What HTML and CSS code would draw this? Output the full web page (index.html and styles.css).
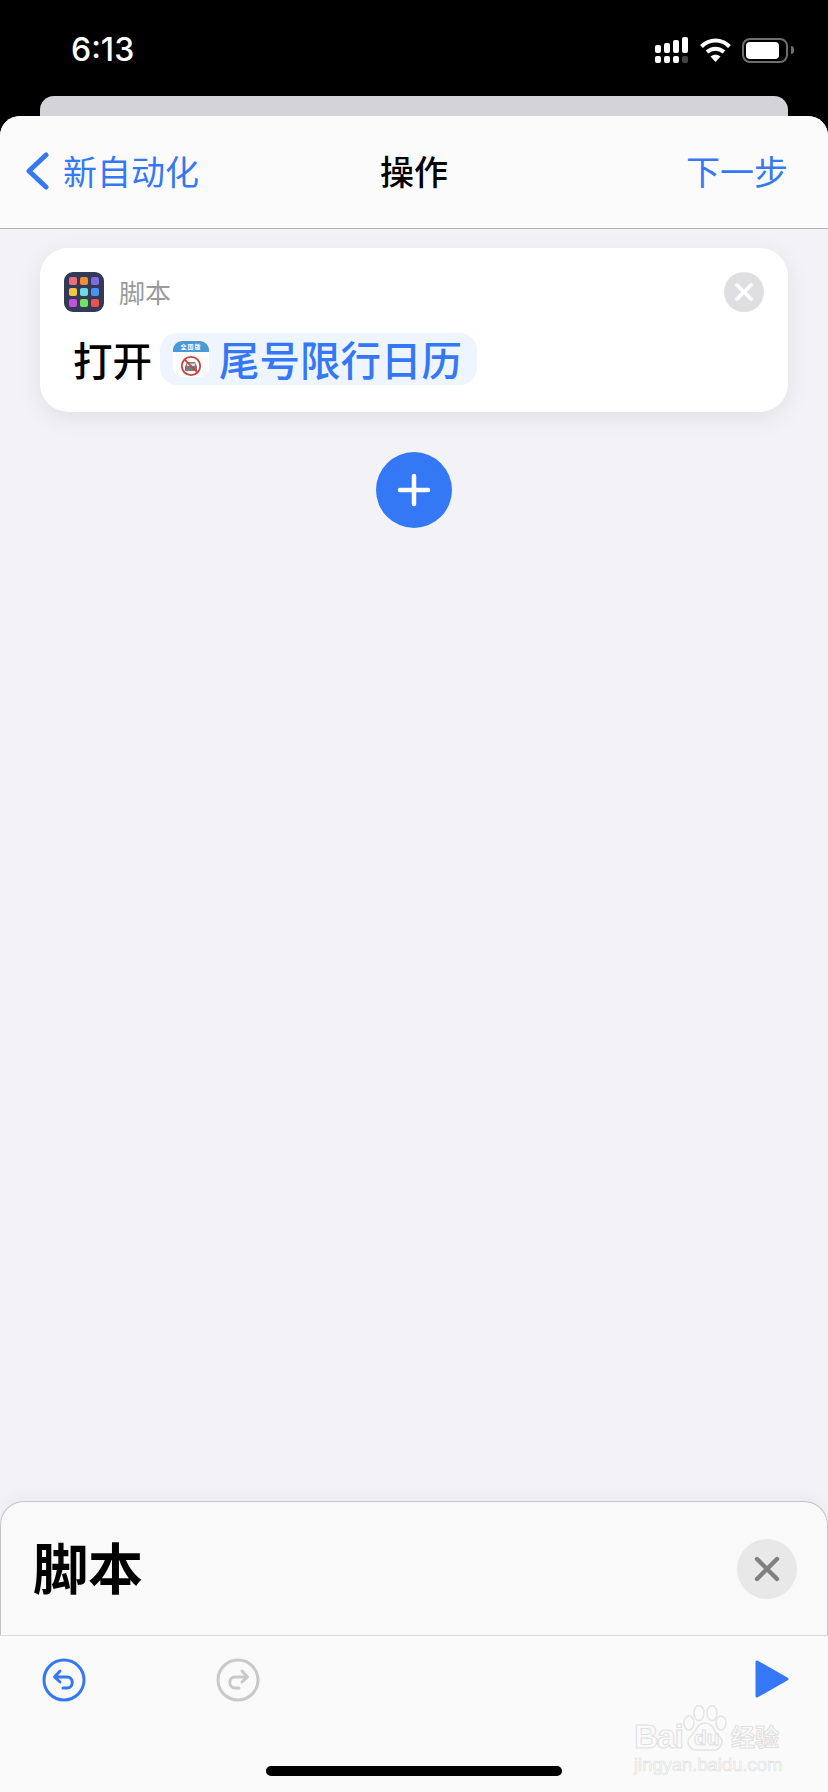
FILE: index.html
```html
<!DOCTYPE html>
<html lang="zh-CN">

<head>
  <meta charset="UTF-8">
  <meta name="viewport" content="width=device-width, initial-scale=1.0">
  <title>操作</title>

  <link rel="stylesheet" href="styles.css">
</head>

<body>
  <header class="status-bar">
    <span class="time">6:13</span>
    <div class="status-icons">
      <svg width="33" height="26" viewBox="0 0 33 26" fill="#fff">
        <rect x="0" y="8" width="6" height="8" rx="2" />
        <rect x="9" y="6" width="6" height="10" rx="2" />
        <rect x="18" y="3" width="6" height="13" rx="2" />
        <rect x="27" y="0" width="6" height="16" rx="2" />
        <rect x="0" y="19" width="6" height="7" rx="2" />
        <rect x="9" y="19" width="6" height="7" rx="2" />
        <rect x="18" y="19" width="6" height="7" rx="2" />
        <rect x="27" y="19" width="6" height="7" rx="2" fill="#444" />
      </svg>
      <svg class="wifi" width="31" height="24" viewBox="0 0 31 24" fill="none" stroke="#fff" stroke-width="4">
        <path d="M1.5 8.5C9.5 0.5 21.5 0.5 29.5 8.5" />
        <path d="M7 14C12 9.5 19 9.5 24 14" />
        <path d="M15.5 24L10.5 18.5C13.5 16 17.5 16 20.5 18.5Z" fill="#fff" stroke="none" />
      </svg>
      <div class="battery">
        <div class="battery-level"></div>
      </div>
      <div class="battery-cap"></div>
    </div>
  </header>

  <div class="peek-card"></div>

  <div class="sheet">
    <nav class="nav-bar">
      <a class="nav-back">
        <svg width="24" height="38" viewBox="0 0 24 38" fill="none" stroke="#3478f6" stroke-width="5" stroke-linecap="round" stroke-linejoin="round">
          <path d="M21 3L4 19L21 35" />
        </svg>
        <span>新自动化</span>
      </a>
      <span class="nav-title">操作</span>
      <a class="nav-next">下一步</a>
    </nav>

    <main class="content">
      <section class="action-card">
        <div class="action-head">
          <div class="scripting-icon">
            <i class="dot dot-rose"></i>
            <i class="dot dot-orange"></i>
            <i class="dot dot-violet"></i>
            <i class="dot dot-yellow"></i>
            <i class="dot dot-cyan"></i>
            <i class="dot dot-blue"></i>
            <i class="dot dot-purple"></i>
            <i class="dot dot-green"></i>
            <i class="dot dot-red"></i>
          </div>
          <span class="action-name">脚本</span>
          <button class="remove-btn">
            <svg width="18" height="18" viewBox="0 0 18 18" stroke="#fff" stroke-width="3.6" stroke-linecap="round">
              <path d="M2 2L16 16M16 2L2 16" />
            </svg>
          </button>
        </div>
        <div class="action-body">
          <span class="verb">打开</span>
          <div class="app-pill">
            <div class="app-icon">
              <div class="app-icon-band">全国版</div>
              <svg width="22" height="22" viewBox="0 0 22 22" fill="none">
                <path d="M5 16V11.5L7 7H15L17 11.5V16Z" fill="#7b7b7b" />
                <rect x="7" y="8.5" width="8" height="2.5" fill="#e2e2e2" />
                <circle cx="11" cy="11" r="9.2" stroke="#c9443c" stroke-width="1.8" />
                <path d="M4.6 4.6L17.4 17.4" stroke="#c9443c" stroke-width="1.8" />
              </svg>
            </div>
            <span class="app-name">尾号限行日历</span>
          </div>
        </div>
      </section>

      <button class="add-btn">
        <svg width="34" height="34" viewBox="0 0 34 34" stroke="#fff" stroke-width="4.5" stroke-linecap="round">
          <path d="M17 3V31M3 17H31" />
        </svg>
      </button>

      <section class="panel">
        <h1 class="panel-title">脚本</h1>
        <button class="panel-close">
          <svg width="26" height="26" viewBox="0 0 26 26" stroke="#808080" stroke-width="4.4" stroke-linecap="round">
            <path d="M3 3L23 23M23 3L3 23" />
          </svg>
        </button>
      </section>

      <footer class="toolbar">
        <svg width="44" height="44" viewBox="0 0 44 44" fill="none" stroke="#3478f6" stroke-width="3" stroke-linecap="round" stroke-linejoin="round">
          <circle cx="22" cy="22" r="20" />
          <path d="M18 13L12.5 19L18 24M13 19H25C32 19 32 30 25 30H21" />
        </svg>
        <svg class="redo" width="44" height="44" viewBox="0 0 44 44" fill="none" stroke="#c9c9c9" stroke-width="3" stroke-linecap="round" stroke-linejoin="round">
          <circle cx="22" cy="22" r="20" />
          <path d="M26 13L31.5 19L26 24M31 19H19C12 19 12 30 19 30H23" />
        </svg>
        <svg class="play" width="34" height="38" viewBox="0 0 34 38" fill="#3478f6" stroke="#3478f6" stroke-width="3" stroke-linejoin="round">
          <path d="M2 2V36L32 19Z" />
        </svg>
        <div class="home-indicator"></div>

        <div class="watermark">
          <div class="watermark-top">
            <span class="watermark-bai">Bai</span>
            <div class="watermark-paw">
              <svg width="44" height="46" viewBox="0 0 44 46" fill="#fafafa" stroke="#e4e4e4" stroke-width="1.5">
                <ellipse cx="6" cy="18" rx="5" ry="7" />
                <ellipse cx="16" cy="8" rx="5" ry="7.5" />
                <ellipse cx="29" cy="8" rx="5" ry="7.5" />
                <ellipse cx="38" cy="18" rx="5" ry="7" />
                <path d="M22 18C14 18 13 27 8 31C2 36 6 45 14 45H30C38 45 42 36 36 31C31 27 30 18 22 18Z" />
              </svg>
              <span class="watermark-du">du</span>
            </div>
            <span class="watermark-cn">经验</span>
          </div>
          <div class="watermark-url">jingyan.baidu.com</div>
        </div>
      </footer>
    </main>
  </div>
</body>

</html>
```

FILE: styles.css
```css
* {
  box-sizing: border-box;
}

html,
body {
  margin: 0;
  height: 100%;
}

body {
  background: #000;
  display: flex;
  flex-direction: column;
  font-family: "Noto Sans CJK SC", "Noto Sans", sans-serif;
  height: 1792px;
  overflow: hidden;
  width: 828px;
}

button {
  border: 0;
  display: flex;
  align-items: center;
  justify-content: center;
  padding: 0;
}

.status-bar {
  align-items: flex-start;
  display: flex;
  flex: none;
  height: 96px;
  justify-content: space-between;
  padding: 30px 34px 0 71px;
}

.time {
  color: #fff;
  font-family: Inter, sans-serif;
  font-size: 32px;
  font-weight: 500;
  line-height: 40px;
}

.status-icons {
  align-items: center;
  display: flex;
  margin-top: 7px;
}

.wifi {
  margin-left: 12px;
}

.battery {
  border: 2px solid #6e6e6e;
  border-radius: 8px;
  height: 25px;
  margin-left: 11px;
  padding: 2px;
  width: 46px;
}

.battery-level {
  background: #fff;
  border-radius: 4px;
  height: 100%;
  width: 33px;
}

.battery-cap {
  background: #6e6e6e;
  border-radius: 0 3px 3px 0;
  height: 8px;
  margin-left: 3px;
  width: 3px;
}

.peek-card {
  background: #d4d4d8;
  border-radius: 14px 14px 0 0;
  flex: none;
  height: 20px;
  margin: 0 40px;
}

.sheet {
  background: #f2f2f7;
  border-radius: 20px 20px 0 0;
  display: flex;
  flex: 1;
  flex-direction: column;
  min-height: 0;
  overflow: hidden;
}

.nav-bar {
  align-items: center;
  background: #fbfbfc;
  border-bottom: 1.5px solid #b2b2b4;
  display: flex;
  flex: none;
  font-size: 34px;
  height: 113px;
  justify-content: space-between;
  padding: 0 40px 3px 25px;
  position: relative;
}

.nav-back {
  align-items: center;
  color: #3478f6;
  display: flex;
  gap: 14px;
}

.nav-title {
  color: #000;
  font-weight: 500;
  left: 380px;
  position: absolute;
}

.nav-next {
  color: #3478f6;
}

.content {
  display: flex;
  flex: 1;
  flex-direction: column;
  min-height: 0;
  padding-top: 19px;
}

.action-card {
  background: #fff;
  border-radius: 28px;
  box-shadow: 0 6px 24px rgba(0, 0, 0, 0.08);
  flex: none;
  height: 164px;
  margin: 0 40px;
  padding: 24px 24px 0;
}

.action-head {
  align-items: center;
  display: flex;
}

.scripting-icon {
  background: #323a58;
  border-radius: 9px;
  display: grid;
  gap: 3px;
  grid-template-columns: repeat(3, 8px);
  height: 40px;
  justify-content: center;
  align-content: center;
  width: 40px;
}

.dot {
  border-radius: 2px;
  height: 8px;
}

.dot-rose { background: #ef6c7a; }
.dot-orange { background: #ef8f35; }
.dot-violet { background: #7d6be0; }
.dot-yellow { background: #f7c544; }
.dot-cyan { background: #70d6e2; }
.dot-blue { background: #4694f0; }
.dot-purple { background: #c94fd6; }
.dot-green { background: #72e25c; }
.dot-red { background: #ee5050; }

.action-name {
  color: #9a9a9a;
  flex: 1;
  font-size: 26px;
  line-height: 40px;
  margin-left: 15px;
}

.remove-btn {
  background: #dfdfe1;
  border-radius: 50%;
  height: 40px;
  width: 40px;
}

.action-body {
  align-items: center;
  display: flex;
  gap: 8px;
  height: 52px;
  margin-top: 21px;
  padding-left: 9px;
}

.verb {
  color: #000;
  font-size: 39.5px;
  font-weight: 500;
  line-height: 52px;
}

.app-pill {
  align-items: center;
  background: #eff5fe;
  border-radius: 17px;
  display: flex;
  gap: 10px;
  height: 52px;
  padding: 0 15px 0 13px;
}

.app-icon {
  align-items: center;
  background: #fff;
  border-radius: 9px;
  display: flex;
  flex-direction: column;
  height: 36px;
  overflow: hidden;
  width: 36px;
}

.app-icon-band {
  background: #4a9ad6;
  color: #fff;
  flex: none;
  font-size: 6px;
  font-weight: 700;
  height: 11px;
  letter-spacing: 1px;
  line-height: 11px;
  text-align: center;
  width: 100%;
}

.app-icon svg {
  margin-top: 3px;
}

.app-name {
  color: #3478f6;
  font-size: 40.5px;
  font-weight: 500;
  line-height: 52px;
  white-space: nowrap;
}

.add-btn {
  background: #3478f6;
  border-radius: 50%;
  flex: none;
  height: 76px;
  margin: 40px auto 0;
  width: 76px;
}

.panel {
  align-items: center;
  background: #f9f9fa;
  border: 1.5px solid #c6c6c8;
  border-bottom: 0;
  border-radius: 24px 24px 0 0;
  box-shadow: 0 -4px 14px rgba(0, 0, 0, 0.04);
  display: flex;
  flex: none;
  height: 134px;
  justify-content: space-between;
  margin-top: auto;
  padding: 0 30px 0 32px;
}

.panel-title {
  color: #000;
  font-size: 55px;
  font-weight: 700;
  margin: 0 0 7px;
}

.panel-close {
  background: #e8e8e9;
  border-radius: 50%;
  height: 60px;
  width: 60px;
}

.toolbar {
  background: #fafafb;
  border-top: 1.5px solid #dcdcde;
  flex: none;
  height: 157px;
  padding: 22px 39px 0 42px;
  display: flex;
  align-items: flex-start;
  position: relative;
}

.redo {
  margin-left: 130px;
}

.play {
  margin-left: auto;
  margin-top: 2px;
}

.home-indicator {
  background: #000;
  border-radius: 5px;
  bottom: 16px;
  height: 10px;
  left: 266px;
  position: absolute;
  width: 296px;
}

/* baidu watermark sits over the toolbar */
.watermark {
  color: #fafafa;
  left: 634px;
  position: absolute;
  top: 69px;
  -webkit-text-stroke: 1px #e0e0e0;
}

.watermark-top {
  align-items: flex-end;
  display: flex;
  height: 46px;
}

.watermark-bai {
  font-family: "Liberation Sans", sans-serif;
  font-size: 34px;
  font-weight: 700;
  letter-spacing: -1.5px;
  line-height: 30px;
  width: 49px;
}

.watermark-paw {
  height: 46px;
  position: relative;
  width: 44px;
}

.watermark-du {
  font-family: "Liberation Sans", sans-serif;
  font-size: 21px;
  font-weight: 700;
  left: 11px;
  line-height: 22px;
  position: absolute;
  top: 22px;
}

.watermark-cn {
  font-size: 24px;
  font-weight: 700;
  line-height: 30px;
  margin-left: 4px;
}

.watermark-url {
  font-family: "Liberation Sans", sans-serif;
  font-size: 18.4px;
  line-height: 22px;
  margin-top: 3px;
  white-space: nowrap;
  -webkit-text-stroke: 0.6px #e0e0e0;
}
```
